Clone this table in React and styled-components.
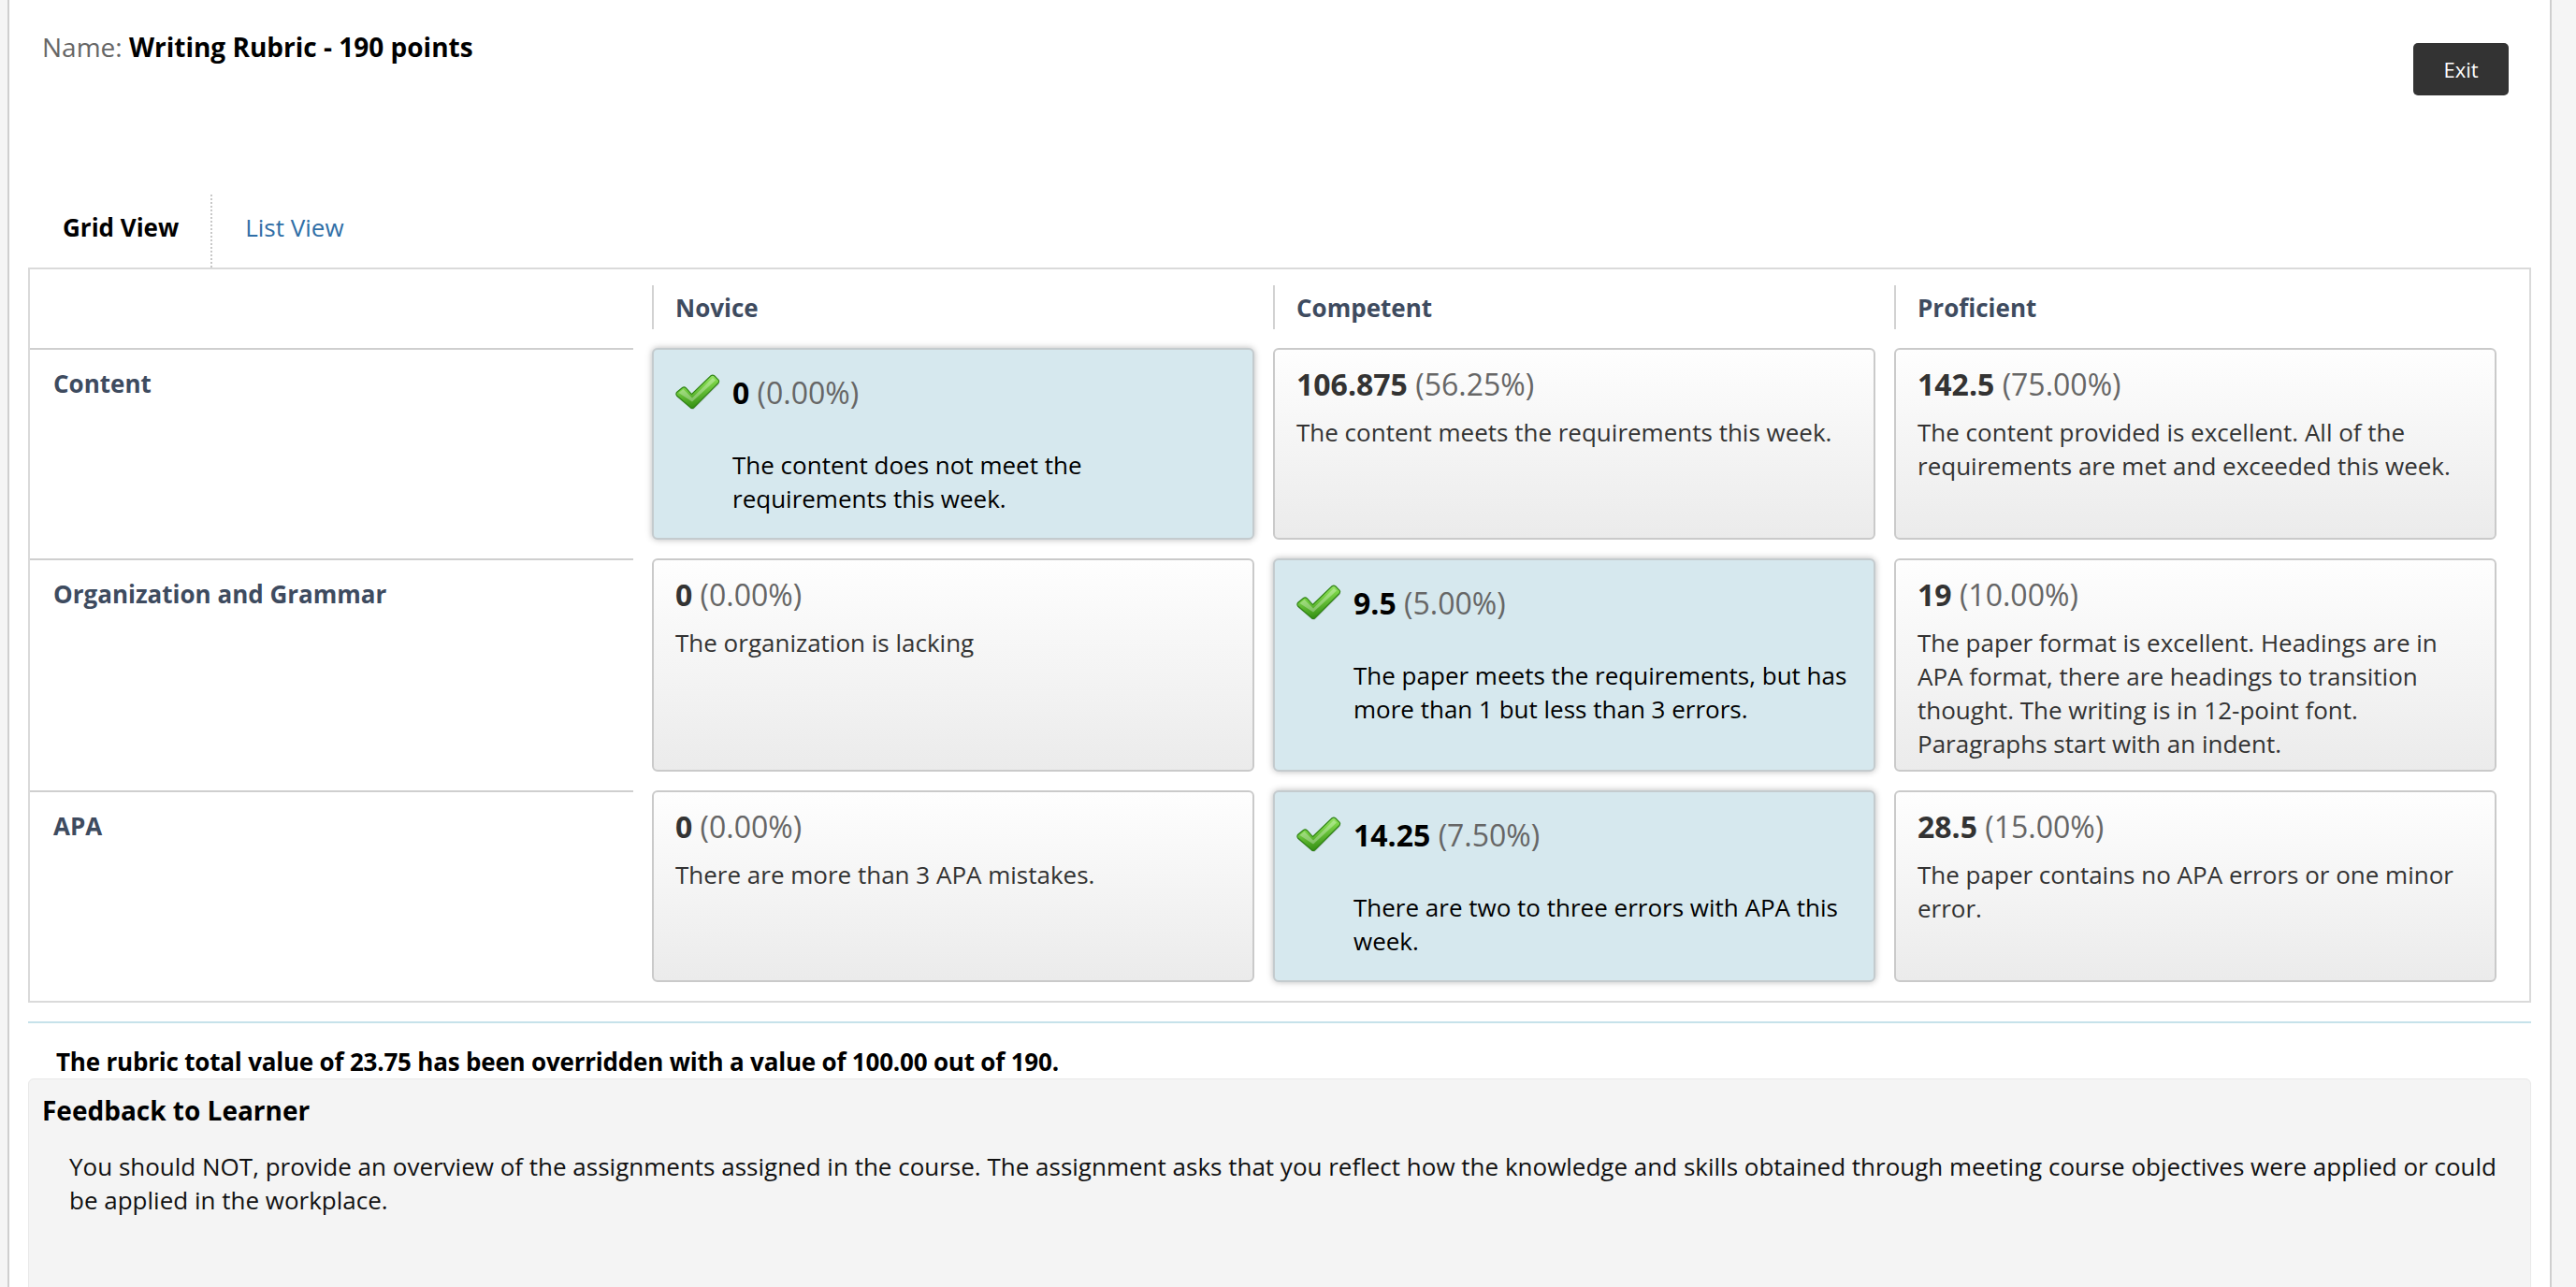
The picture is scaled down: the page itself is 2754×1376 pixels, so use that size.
import React from "react";
import styled, { createGlobalStyle } from "styled-components";

const GlobalStyle = createGlobalStyle`
  *, *::before, *::after { box-sizing: border-box; }
  html, body {
    margin: 0;
    padding: 0;
    overflow: hidden;
    background: #f5f5f5;
    font-family: "Open Sans", "Liberation Sans", sans-serif;
    color: #333;
  }
`;

const levels = ["Novice", "Competent", "Proficient"];

const rows = [
  {
    name: "Content",
    cells: [
      { score: "0", pct: "0.00%", text: "The content does not meet the requirements this week.", selected: true },
      { score: "106.875", pct: "56.25%", text: "The content meets the requirements this week." },
      { score: "142.5", pct: "75.00%", text: "The content provided is excellent. All of the requirements are met and exceeded this week." },
    ],
  },
  {
    name: "Organization and Grammar",
    cells: [
      { score: "0", pct: "0.00%", text: "The organization is lacking" },
      { score: "9.5", pct: "5.00%", text: "The paper meets the requirements, but has more than 1 but less than 3 errors.", selected: true },
      { score: "19", pct: "10.00%", text: "The paper format is excellent. Headings are in APA format, there are headings to transition thought. The writing is in 12-point font. Paragraphs start with an indent." },
    ],
  },
  {
    name: "APA",
    cells: [
      { score: "0", pct: "0.00%", text: "There are more than 3 APA mistakes." },
      { score: "14.25", pct: "7.50%", text: "There are two to three errors with APA this week.", selected: true },
      { score: "28.5", pct: "15.00%", text: "The paper contains no APA errors or one minor error." },
    ],
  },
];

const Page = styled.div`
  margin: 0 26px 0 8px;
  min-height: 100vh;
  padding: 0 20px;
  background: #fff;
  border-left: 2px solid #cfcfcf;
  border-right: 2px solid #cfcfcf;
`;

const Header = styled.header`
  height: 208px;
  padding: 31px 24px 0 15px;
  display: flex;
  justify-content: space-between;
  align-items: flex-start;
`;

const Title = styled.div`
  font-size: 28px;
  line-height: 38px;
  color: #666;
  b {
    color: #000;
    font-weight: 700;
  }
`;

const ExitButton = styled.button`
  margin-top: 15px;
  width: 102px;
  height: 56px;
  border: none;
  border-radius: 5px;
  background: #333;
  color: #fff;
  font-family: inherit;
  font-size: 22px;
  cursor: pointer;
`;

const Tabs = styled.div`
  display: flex;
`;

const Tab = styled.div`
  padding: ${(p) => (p.$active ? "17px 34px 25px 37px" : "17px 36px 25px 35px")};
  font-size: 26px;
  line-height: 36px;
  font-weight: ${(p) => (p.$active ? 700 : 400)};
  color: ${(p) => (p.$active ? "#000" : "#2f6ea6")};
  border-right: ${(p) => (p.$active ? "2px dotted #c8c8c8" : "none")};
`;

const Grid = styled.div`
  display: grid;
  grid-template-columns: 645px repeat(3, 1fr);
  column-gap: 20px;
  row-gap: 20px;
  padding: 0 35px 20px 0;
  border: 2px solid #dadada;
`;

const HeaderCell = styled.div`
  margin-top: 17px;
  height: 47px;
  padding-left: 23px;
  display: flex;
  align-items: center;
  border-left: 2px solid #d2d2d2;
  font-size: 26px;
  font-weight: 700;
  color: #3e4b5f;
`;

const RowLabel = styled.div`
  padding: 18px 25px;
  border-top: 2px solid #cfcfcf;
  font-size: 26px;
  line-height: 36px;
  font-weight: 700;
  color: #3e4b5f;
`;

const Cell = styled.div`
  display: flex;
  align-items: flex-start;
  gap: 13px;
  padding: ${(p) => (p.$selected ? "26px 20px 24px 23px" : "17px 20px 10px 23px")};
  border: 2px solid ${(p) => (p.$selected ? "#c4cbce" : "#cacaca")};
  border-radius: 6px;
  background: ${(p) => (p.$selected ? "#d6e8ee" : "linear-gradient(to bottom, #fefefe, #ebebeb)")};
  box-shadow: ${(p) => (p.$selected ? "0 0 7px rgba(0, 0, 0, 0.28)" : "none")};
  color: ${(p) => (p.$selected ? "#000" : "#333")};
`;

const CellText = styled.div`
  flex: 1;
  min-width: 0;
`;

const Score = styled.div`
  font-size: 32px;
  line-height: 40px;
  b {
    font-weight: 700;
  }
  span {
    color: #666;
  }
`;

const Desc = styled.p`
  margin: ${(p) => (p.$selected ? "39px" : "13px")} 0 0;
  font-size: 26px;
  line-height: 36px;
`;

const Divider = styled.div`
  margin-top: 20px;
  height: 2px;
  background: #c6e2ea;
`;

const Override = styled.p`
  margin: 23px 0 0;
  padding-left: 30px;
  font-size: 26px;
  line-height: 36px;
  font-weight: 700;
  letter-spacing: -0.2px;
  color: #000;
`;

const Feedback = styled.section`
  min-height: 240px;
  padding: 13px 14px;
  background: #f4f4f4;
  border: 1px solid #e9e9e9;
  border-radius: 6px;
`;

const FeedbackTitle = styled.h3`
  margin: 0;
  font-size: 28px;
  line-height: 40px;
  font-weight: 700;
  color: #000;
`;

const FeedbackText = styled.p`
  margin: 22px 16px 0 29px;
  font-size: 26px;
  line-height: 36px;
  color: #111;
`;

const CheckIcon = () => (
  <svg width="48" height="40" viewBox="0 0 48 38" style={{ flexShrink: 0, marginTop: 0 }}>
    <defs>
      <linearGradient id="checkFill" x1="0" y1="0" x2="0.25" y2="1">
        <stop offset="0" stopColor="#b4f08a" />
        <stop offset="0.4" stopColor="#7bd447" />
        <stop offset="1" stopColor="#379214" />
      </linearGradient>
    </defs>
    <path
      d="M2 24 Q0.5 22 2.5 20 L8 15.5 Q10 14 12 16 L18 22.5 L38.5 2.5 Q40.5 0.8 42.5 2.5 L46.5 6.5 Q48 8.5 46 10.5 L20.5 36 Q18.5 38 16.5 36 Z"
      fill="#000"
      opacity="0.13"
    />
    <path
      d="M1.5 22 Q0 20 2 18 L7.5 13.5 Q9.5 12 11.5 14 L17.5 20.5 L38 0.8 Q40 -0.6 42 1 L46 5 Q47.5 7 45.5 9 L20 34.5 Q18 36.5 16 34.5 Z"
      fill="url(#checkFill)"
      stroke="#2f8214"
      strokeWidth="1.1"
    />
    <path d="M3.5 19 L8.5 15 L18 24.5 L40 3 L43 5.5 L18 28.5 Z" fill="#fff" opacity="0.3" />
  </svg>
);

const RubricCell = ({ score, pct, text, selected }) => (
  <Cell $selected={selected}>
    {selected && <CheckIcon />}
    <CellText>
      <Score>
        <b>{score}</b> <span>({pct})</span>
      </Score>
      <Desc $selected={selected}>{text}</Desc>
    </CellText>
  </Cell>
);

export default function App() {
  return (
    <>
      <GlobalStyle />
      <Page>
        <Header>
          <Title>
            Name: <b>Writing Rubric - 190 points</b>
          </Title>
          <ExitButton>Exit</ExitButton>
        </Header>

        <Tabs>
          <Tab $active>Grid View</Tab>
          <Tab>List View</Tab>
        </Tabs>

        <Grid>
          <div />
          {levels.map((level) => (
            <HeaderCell key={level}>{level}</HeaderCell>
          ))}
          {rows.map((row) => (
            <React.Fragment key={row.name}>
              <RowLabel>{row.name}</RowLabel>
              {row.cells.map((cell, i) => (
                <RubricCell key={i} {...cell} />
              ))}
            </React.Fragment>
          ))}
        </Grid>

        <Divider />
        <Override>
          The rubric total value of 23.75 has been overridden with a value of 100.00 out of 190.
        </Override>

        <Feedback>
          <FeedbackTitle>Feedback to Learner</FeedbackTitle>
          <FeedbackText>
            You should NOT, provide an overview of the assignments assigned in the course. The
            assignment asks that you reflect how the knowledge and skills obtained through meeting
            course objectives were applied or could be applied in the workplace.
          </FeedbackText>
        </Feedback>
      </Page>
    </>
  );
}
